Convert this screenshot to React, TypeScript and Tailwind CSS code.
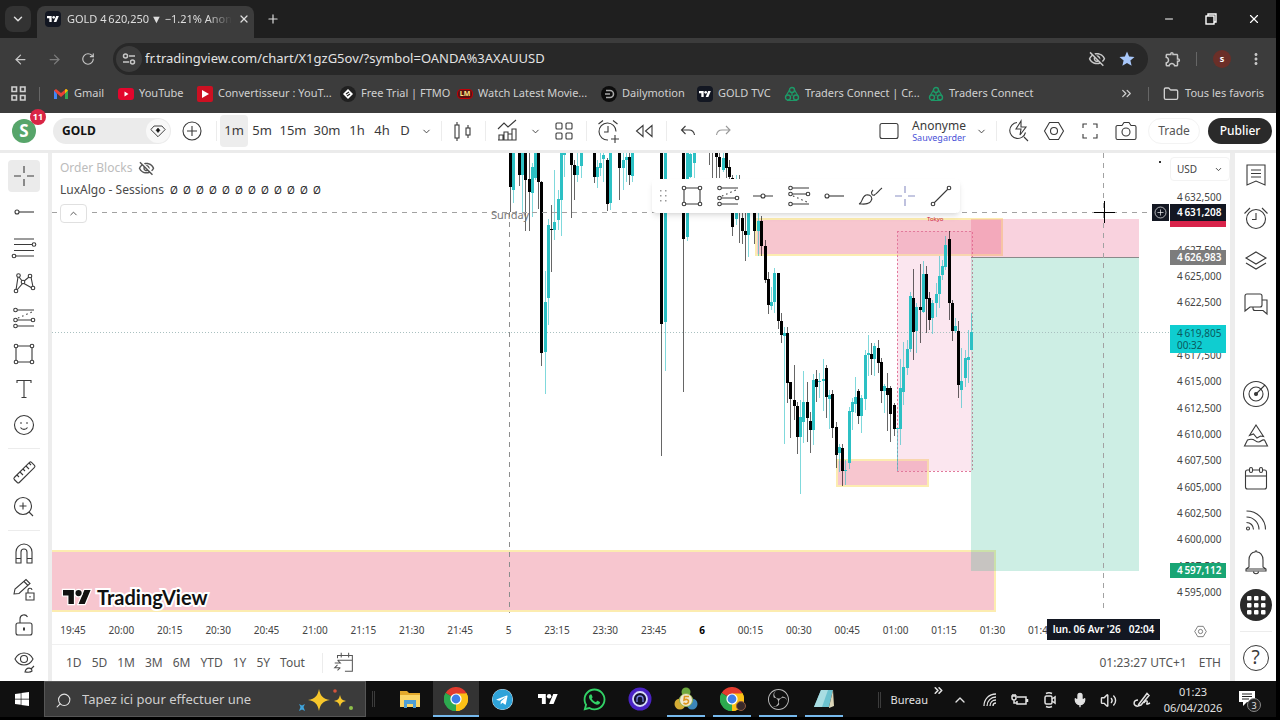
import type { ReactNode } from "react";
import {
  ArrowLeft,
  ArrowRight,
  ChevronDown,
  ChevronUp,
  ChevronsRight,
  Folder,
  Mic,
  Minus,
  Plus,
  RotateCw,
  Search,
  Volume2,
  X,
} from "lucide-react";
import { FaTelegram, FaWhatsapp, FaWindows } from "react-icons/fa";
import { MdMoreVert, MdOutlineExtension, MdOutlineVisibilityOff, MdStar } from "react-icons/md";
import { SiObsstudio } from "react-icons/si";

/* ── Icons ── */

function Glyph({ children, size = 28 }: { children: ReactNode; size?: number }) {
  return (
    <svg
      width={size}
      height={size}
      viewBox="0 0 28 28"
      fill="none"
      stroke="currentColor"
      strokeWidth="1.1"
      className="shrink-0"
      aria-hidden="true"
    >
      {children}
    </svg>
  );
}

function TvMark({ className }: { className?: string }) {
  return (
    <svg viewBox="0 4 36 18" className={className} fill="currentColor" aria-hidden="true">
      <path d="M14 22H7V11H0V4h14v18zM28 22h-8l7.5-18h8L28 22z" />
      <circle cx="20" cy="8" r="4" />
    </svg>
  );
}

function TvBadge() {
  return (
    <span className="flex h-4 w-4 shrink-0 items-center justify-center rounded-sm bg-[#131722] text-white">
      <TvMark className="w-3" />
    </span>
  );
}

function ChromeLogo({ size = 24 }: { size?: number }) {
  return (
    <svg width={size} height={size} viewBox="0 0 24 24" aria-hidden="true">
      <path d="M12 12 1.6 6A12 12 0 0 1 22.4 6z" fill="#e33b2e" />
      <path d="M12 12 22.4 6A12 12 0 0 1 12 24z" fill="#fbc116" />
      <path d="M12 12v12A12 12 0 0 1 1.6 6z" fill="#2da94f" />
      <path d="M12 6.5h10.6A12 12 0 0 1 12 24l4.8-9.2z" fill="#fbc116" />
      <path d="M1.6 6 7.2 14.8 12 17.5 12 24A12 12 0 0 1 1.6 6z" fill="#2da94f" />
      <circle cx="12" cy="12" r="5.6" fill="#fff" />
      <circle cx="12" cy="12" r="4.4" fill="#3f7ee8" />
    </svg>
  );
}

const icons = {
  cross: <path d="M14 4v7M14 17v7M4 14h7M17 14h7" />,
  hray: (
    <>
      <circle cx="7" cy="14" r="2" />
      <path d="M9 14h15" />
    </>
  ),
  hline: (
    <>
      <circle cx="14" cy="14" r="2" />
      <path d="M4 14h8M16 14h8" />
    </>
  ),
  fib: (
    <>
      <path d="M4 6h20M4 11.5h18M4 17.5h20M6 23h18" />
      <circle cx="24" cy="11.5" r="1.8" fill="#fff" />
      <circle cx="4" cy="23" r="1.8" fill="#fff" />
    </>
  ),
  pattern: (
    <>
      <path d="M6 21 8 8M9 8l4 5 6-5M21 8l2 10M7 21l6-7 9 5" />
      <circle cx="6" cy="22" r="1.8" fill="#fff" />
      <circle cx="8.500" cy="6.500" r="1.8" fill="#fff" />
      <circle cx="13" cy="13" r="1.8" fill="#fff" />
      <circle cx="20" cy="7" r="1.8" fill="#fff" />
      <circle cx="23" cy="19" r="1.8" fill="#fff" />
    </>
  ),
  forecast: (
    <>
      <path d="M7 6h17M7 16h15M7 22h17" />
      <path d="m8 14 14-6" strokeDasharray="1.5 3" />
      <circle cx="5.500" cy="6" r="1.8" fill="#fff" />
      <circle cx="5.500" cy="16" r="1.8" fill="#fff" />
      <circle cx="5.500" cy="22" r="1.8" fill="#fff" />
      <circle cx="23" cy="16" r="1.8" fill="#fff" />
    </>
  ),
  shortPos: (
    <>
      <path d="M7 6h17M7 12h15M7 22h17" />
      <path d="m8 14 14 6" strokeDasharray="1.5 3" />
      <circle cx="5.500" cy="6" r="1.8" fill="#fff" />
      <circle cx="5.500" cy="12" r="1.8" fill="#fff" />
      <circle cx="5.500" cy="22" r="1.8" fill="#fff" />
      <circle cx="23" cy="12" r="1.8" fill="#fff" />
    </>
  ),
  rect: (
    <>
      <path d="M8 6h12M8 22h12M6 8v12M22 8v12" />
      <circle cx="6" cy="6" r="1.8" />
      <circle cx="22" cy="6" r="1.8" />
      <circle cx="6" cy="22" r="1.8" />
      <circle cx="22" cy="22" r="1.8" />
    </>
  ),
  text: <path d="M7 8V5.500h14V8M14 5.500v17M11.500 22.500h5" />,
  smile: (
    <>
      <circle cx="14" cy="14" r="9.500" />
      <path d="M10.500 16.500c1.500 2.500 5.500 2.500 7 0" />
      <path d="M10.500 12h1M16.500 12h1" strokeWidth="2" />
    </>
  ),
  ruler: (
    <>
      <path d="M4.300 19.500 19.500 4.300a1.500 1.500 0 0 1 2 0l3 3a1.500 1.500 0 0 1 0 2L9.300 24.500a1.500 1.500 0 0 1-2 0l-3-3a1.500 1.500 0 0 1 0-2z" />
      <path d="m7 17 2 2M10 14l3 3M13 11l2 2M16 8l3 3M19 5l2 2" />
    </>
  ),
  zoom: (
    <>
      <circle cx="13" cy="13" r="8.500" />
      <path d="M13 9.500v7M9.500 13h7M19 19l4 4" />
    </>
  ),
  magnet: (
    <>
      <path d="M6 23V12a8 8 0 0 1 16 0v11h-5V12a3 3 0 0 0-6 0v11z" />
      <path d="M6 18.500h5M17 18.500h5" />
    </>
  ),
  pencilLock: (
    <>
      <path d="m4 18 1-5L16 3.500l4 4L9 17.500z M14 5.500l4 4" />
      <path d="M16 17h8v7h-8zM18 17v-2.500a2 2 0 0 1 4-.5M20 20v1.500" />
    </>
  ),
  lock: (
    <>
      <rect x="6" y="12" width="16" height="12" rx="2" />
      <path d="M10 12V8a4 4 0 0 1 7.500-2" />
      <path d="M14 16.500v3" strokeWidth="2" />
    </>
  ),
  eyeBrush: (
    <>
      <path d="M5 12c4-8 14-8 18 0-4 8-14 8-18 0z" />
      <circle cx="14" cy="12" r="3.500" />
      <path d="M15 25c1-5 7-5 7-1-2 2-5 1-7 1zM21 22l3-3" />
    </>
  ),
  candles: (
    <>
      <rect x="6" y="8" width="4" height="13" />
      <rect x="17" y="11" width="4" height="7" />
      <path d="M8 5v3M8 21v3M19 8v3M19 18v3" />
    </>
  ),
  indicators: (
    <>
      <path d="m5 12 6-6 4 4 8-7M6 23v-5h4v5M11 23v-8h4v8M15 23v-6h4v6M19 23V12h4v11zM5 23h18" />
    </>
  ),
  layouts: (
    <>
      <rect x="6" y="6" width="6" height="6" rx="1" />
      <rect x="16" y="6" width="6" height="6" rx="1" />
      <rect x="6" y="16" width="6" height="6" rx="1" />
      <rect x="16" y="16" width="6" height="6" rx="1" />
    </>
  ),
  alertAdd: (
    <>
      <path d="M22 14.500A8.500 8.500 0 1 0 14 23M14 9v6h-4M4.500 7 9 3.500M19 3.500 23.500 7M21 18v8M17 22h8" />
    </>
  ),
  replay: <path d="M13 8.500v11L6.500 14zM22 8.500v11L15.500 14z" />,
  undo: <path d="m11.500 9-4 4 4 4M8 13h7c4 0 5 2 5.500 5" />,
  redo: <path d="m16 9 4 4-4 4M19 13h-7c-4 0-5 2-5.500 5" />,
  layoutBox: <rect x="5" y="6.500" width="18" height="15" rx="2" />,
  quickSearch: (
    <>
      <path d="M13 5.500a8 8 0 1 0 8.500 10M20 20l4 4" />
      <path d="m17 4-5 8h5l-1 6 6-8h-5z" />
    </>
  ),
  gear: (
    <>
      <path d="M9.500 5.500h9L23.500 14l-5 8.500h-9L4.500 14z" />
      <circle cx="14" cy="14" r="3.500" />
    </>
  ),
  fullscreen: <path d="M7 11V7h4M17 7h4v4M21 17v4h-4M11 21H7v-4" />,
  camera: (
    <>
      <path d="M6 8.500h4l2-3h5l2 3h3.500a1.500 1.500 0 0 1 1.500 1.500v11a1.500 1.500 0 0 1-1.500 1.500h-17A1.500 1.500 0 0 1 4 21V10a1.500 1.500 0 0 1 1.500-1.500z" />
      <circle cx="14" cy="15" r="4" />
    </>
  ),
  brush: (
    <>
      <path d="M3 22c4-1 2-7 7-9 5-1 7 3 5 6-2 4-7 3-12 3z" />
      <path d="M17 8c-3 3-1 6 2 5M18 13c3-1 4-4 8-7" />
    </>
  ),
  trend: (
    <>
      <path d="M6.500 21.500 21.500 6.500" />
      <circle cx="6" cy="22" r="1.8" fill="#fff" />
      <circle cx="22" cy="6" r="1.8" fill="#fff" />
    </>
  ),
  watchlist: <path d="M5 4h18v20l-9-4-9 4zM9 9h10M9 12.500h10M9 16h10" />,
  alarm: (
    <>
      <circle cx="14" cy="15" r="9.500" />
      <path d="M14 9v6.500h-4M2.500 9.500 8 4M20 4l5.500 5.500" />
    </>
  ),
  layers: <path d="m14 5 10 6-10 6-10-6zM4 16l10 6 10-6" />,
  chat: (
    <>
      <path d="M5 4h13a2 2 0 0 1 2 2v9a2 2 0 0 1-2 2H8l-5 4V6a2 2 0 0 1 2-2z" />
      <path d="M20 10h5v14l-4-3.500h-8a2 2 0 0 1-2-2V17" />
    </>
  ),
  target: (
    <>
      <circle cx="14" cy="14" r="12.500" />
      <circle cx="14" cy="14" r="7" />
      <circle cx="14" cy="14" r="1.500" fill="currentColor" />
      <path d="m14 14 9-9" />
    </>
  ),
  pyramid: (
    <>
      <path d="M14 3 7.500 13.500l4-1.500 3.500 4 3.500-2 3 .5z" />
      <path d="M5.500 18 2.500 24h23l-3-6c-3-1-3 2-6 2-4 0-4-5-11-2z" />
    </>
  ),
  calendar: (
    <>
      <rect x="3.500" y="6" width="21" height="19" rx="2" />
      <path d="M3.500 12h21" />
      <rect x="7.500" y="3.500" width="3" height="5" rx="1.500" fill="#fff" />
      <rect x="17.500" y="3.500" width="3" height="5" rx="1.500" fill="#fff" />
    </>
  ),
  feed: (
    <>
      <circle cx="6" cy="22.500" r="1.500" />
      <path d="M4.500 16.500c4 0 7 3 7 7M4.500 11c7 0 12.500 5.500 12.500 12.500M4.500 5c10.500 0 19 8 19 18.500" />
    </>
  ),
  bell: (
    <>
      <path d="M7 19v-7c0-5 3-8 6-8 0-1.500 2-1.500 2 0 3 0 6 3 6 8v7l3 2v2H4v-2zM4 21h20" />
      <path d="M11.500 23.500c0 3 5 3 5 0" />
    </>
  ),
  goto: <path d="M7 9V6h16v17h-8M11 3v5M19 3v5M7 11h16M4 14h6l-3-3M10 19H4l3-3M7 22l3-3" />,
  diamond: (
    <>
      <path d="M8.500 7h11l4.500 5-10 10L4 12z" />
      <path d="m14 10 2.500 3-2.500 3-2.500-3z" fill="currentColor" />
    </>
  ),
  plusCircle: (
    <>
      <circle cx="14" cy="14" r="9" />
      <path d="M14 9v10M9 14h10" />
    </>
  ),
};

type IconName = keyof typeof icons;

/* ── Data ── */

type Bookmark = { label: string; width: string; icon: ReactNode };

const tradersIcon = (
  <svg width="16" height="16" viewBox="0 0 16 16" fill="none" stroke="#1d9a68" strokeWidth="1.4" className="shrink-0">
    <circle cx="8" cy="4" r="2.500" />
    <circle cx="4" cy="11.500" r="2.500" />
    <circle cx="12" cy="11.500" r="2.500" />
    <path d="M2.500 9 5.500 4M13.500 9l-3-5M3 14.500h10M8 7v3" strokeWidth="1.200" />
  </svg>
);

const bookmarks: Bookmark[] = [
  {
    label: "Gmail",
    width: "w-[65px]",
    icon: (
      <svg width="16" height="16" viewBox="0 0 16 16" className="shrink-0">
        <path d="M1 4v9h3V7.500z" fill="#4285f4" />
        <path d="M15 4v9h-3V7.500z" fill="#34a853" />
        <path d="M1 4.500 3 3l5 4 5-4-1 4.500L8 11 4 7.500z" fill="#ea4335" />
        <path d="m12 3.500 1.500-.5L15 4.500 12 7.500z" fill="#fbbc04" />
      </svg>
    ),
  },
  {
    label: "YouTube",
    width: "w-[79px]",
    icon: (
      <svg width="16" height="16" viewBox="0 0 16 16" className="shrink-0">
        <rect x="0" y="2" width="16" height="12" rx="3" fill="#e3062d" />
        <path d="m6.500 5.500 4 2.500-4 2.500z" fill="#fff" />
      </svg>
    ),
  },
  {
    label: "Convertisseur : YouT...",
    width: "w-[143px]",
    icon: (
      <svg width="16" height="16" viewBox="0 0 16 16" className="shrink-0">
        <rect width="16" height="16" rx="2" fill="#cc1022" />
        <path d="m5 4 7 4-7 4z" fill="#fff" />
      </svg>
    ),
  },
  {
    label: "Free Trial | FTMO",
    width: "w-[117px]",
    icon: (
      <svg width="16" height="16" viewBox="0 0 16 16" className="shrink-0">
        <circle cx="8" cy="8" r="8" fill="#202020" />
        <path d="m8 3 5 5-5 5-5-5z" fill="#fff" />
        <path d="m6 8 3-2M7 10l3-2" stroke="#202020" strokeWidth="1.2" />
      </svg>
    ),
  },
  {
    label: "Watch Latest Movie...",
    width: "w-[144px]",
    icon: (
      <span className="flex h-4 w-4 shrink-0 items-center">
        <span className="flex h-2.5 w-4 items-center justify-center rounded-sm border border-red-700 bg-[#5a1010] text-[7px] font-bold leading-none text-amber-200">
          LM
        </span>
      </span>
    ),
  },
  {
    label: "Dailymotion",
    width: "w-[96px]",
    icon: (
      <svg width="16" height="16" viewBox="0 0 16 16" className="shrink-0" fill="none">
        <circle cx="8" cy="8" r="8" fill="#0c0c0c" />
        <path d="M5 4.500h4a3.500 3.500 0 0 1 0 7H5M4 8h5" stroke="#a8a8a8" strokeWidth="1.6" />
      </svg>
    ),
  },
  { label: "GOLD TVC", width: "w-[87px]", icon: <TvBadge /> },
  { label: "Traders Connect | Cr...", width: "w-[144px]", icon: tradersIcon },
  { label: "Traders Connect", width: "w-[110px]", icon: tradersIcon },
];

const intervals = [
  { label: "1m", width: "w-7" },
  { label: "5m", width: "w-7" },
  { label: "15m", width: "w-[34px]" },
  { label: "30m", width: "w-[34px]" },
  { label: "1h", width: "w-[26px]" },
  { label: "4h", width: "w-[24px]" },
  { label: "D", width: "w-[22px]" },
];

const leftTools: (IconName | "sep")[] = [
  "cross",
  "hray",
  "fib",
  "pattern",
  "forecast",
  "rect",
  "text",
  "smile",
  "sep",
  "ruler",
  "zoom",
  "sep",
  "magnet",
  "pencilLock",
  "lock",
  "eyeBrush",
];

const floatingTools: IconName[] = ["rect", "forecast", "hline", "shortPos", "hray", "brush", "cross", "trend"];

// empty rows are the ones a price tag takes over
const prices = [
  "4\u2009632,500", "", "4\u2009627,500", "4\u2009625,000", "4\u2009622,500", "", "4\u2009617,500", "4\u2009615,000",
  "4\u2009612,500", "4\u2009610,000", "4\u2009607,500", "4\u2009605,000", "4\u2009602,500", "4\u2009600,000", "4\u2009597,500", "4\u2009595,000",
];

const times = [
  "19:45", "20:00", "20:15", "20:30", "20:45", "21:00", "21:15", "21:30", "21:45", "5", "23:15",
  "23:30", "23:45", "6", "00:15", "00:30", "00:45", "01:00", "01:15", "01:30", "01:45",
];

const ranges = ["1D", "5D", "1M", "3M", "6M", "YTD", "1Y", "5Y", "Tout"];

// x, high, body top, body bottom, low, rising
type Candle = [number, number, number, number, number, 0 | 1];

const candles: Candle[] = [
  [510, 153, 153, 187, 212, 0], [513, 153, 153, 190, 203, 1], [519, 153, 153, 175, 186, 0],
  [522, 153, 153, 175, 213, 1], [525, 153, 153, 180, 231, 0], [529, 153, 179, 192, 231, 0],
  [532, 163, 167, 193, 217, 1], [535, 153, 153, 178, 180, 1], [538, 153, 153, 182, 209, 0],
  [541, 181, 182, 353, 366, 0], [545, 271, 302, 352, 394, 1], [548, 219, 225, 298, 325, 1],
  [551, 205, 229, 230, 272, 0], [554, 170, 222, 230, 240, 1], [558, 190, 199, 220, 230, 1],
  [561, 153, 153, 200, 236, 1], [564, 153, 153, 155, 177, 1], [571, 153, 153, 165, 218, 0],
  [574, 160, 165, 175, 200, 0], [577, 153, 166, 175, 182, 1], [581, 153, 153, 166, 178, 1],
  [594, 153, 153, 177, 183, 0], [597, 160, 167, 177, 188, 1], [600, 153, 163, 168, 176, 1],
  [603, 153, 155, 159, 182, 1], [607, 158, 160, 204, 211, 0], [610, 153, 153, 203, 210, 1],
  [619, 153, 153, 168, 200, 0], [623, 153, 160, 168, 190, 1], [626, 153, 157, 160, 182, 1],
  [629, 153, 157, 175, 185, 0], [632, 153, 153, 176, 182, 1], [661, 153, 153, 324, 456, 0],
  [665, 153, 153, 322, 371, 1], [683, 153, 153, 239, 392, 0], [687, 153, 153, 237, 241, 1],
  [690, 153, 154, 177, 178, 1], [694, 153, 153, 163, 178, 1], [709, 153, 153, 153, 165, 0],
  [712, 153, 153, 153, 178, 0], [716, 153, 153, 157, 178, 0], [719, 153, 157, 167, 178, 0],
  [723, 153, 158, 170, 172, 1], [726, 153, 153, 168, 178, 0], [729, 160, 167, 177, 185, 0],
  [732, 175, 178, 227, 236, 0], [736, 175, 180, 219, 225, 1], [739, 175, 212, 213, 243, 0],
  [742, 212, 218, 231, 244, 0], [745, 212, 231, 235, 261, 0], [748, 205, 212, 235, 257, 1],
  [754, 205, 210, 231, 244, 0], [758, 212, 221, 231, 256, 1], [761, 216, 221, 246, 256, 0],
  [765, 240, 246, 280, 283, 0], [768, 272, 279, 305, 314, 0], [771, 287, 302, 306, 310, 1],
  [774, 268, 273, 302, 313, 1], [778, 273, 273, 321, 329, 0], [781, 313, 321, 335, 343, 0],
  [784, 327, 333, 336, 444, 1], [787, 327, 333, 383, 403, 0], [790, 382, 382, 399, 438, 0],
  [794, 365, 400, 406, 420, 0], [797, 402, 406, 437, 454, 0], [800, 400, 417, 437, 494, 1],
  [803, 371, 402, 422, 443, 1], [807, 382, 402, 418, 442, 0], [810, 412, 421, 430, 453, 0],
  [813, 374, 380, 430, 445, 1], [816, 370, 379, 387, 402, 0], [819, 373, 381, 382, 398, 1],
  [823, 359, 379, 381, 411, 1], [826, 365, 368, 397, 418, 0], [829, 390, 395, 399, 429, 1],
  [832, 390, 394, 428, 438, 0], [836, 422, 427, 455, 468, 0], [839, 444, 447, 453, 472, 1],
  [842, 444, 448, 471, 486, 0], [845, 460, 470, 471, 485, 1], [849, 407, 411, 463, 469, 1],
  [852, 398, 402, 412, 430, 1], [855, 377, 397, 404, 413, 1], [858, 389, 391, 416, 424, 0],
  [861, 395, 398, 416, 433, 1], [865, 350, 355, 399, 410, 1], [868, 335, 353, 355, 376, 1],
  [871, 343, 354, 359, 375, 0], [874, 343, 346, 359, 376, 1], [878, 340, 348, 363, 373, 0],
  [881, 358, 362, 391, 403, 0], [884, 384, 386, 391, 413, 1], [887, 373, 388, 395, 431, 0],
  [890, 386, 388, 414, 442, 0], [894, 403, 405, 429, 436, 0], [897, 428, 428, 429, 471, 1],
  [900, 359, 388, 429, 445, 1], [903, 342, 367, 392, 405, 1], [907, 340, 349, 368, 375, 1],
  [910, 292, 296, 349, 352, 1], [913, 269, 298, 332, 360, 0], [916, 303, 307, 331, 353, 1],
  [920, 264, 307, 310, 343, 0], [923, 261, 274, 312, 313, 1], [926, 266, 274, 299, 333, 0],
  [929, 292, 298, 320, 330, 0], [932, 300, 303, 318, 334, 1], [936, 283, 294, 303, 317, 1],
  [939, 256, 276, 294, 308, 1], [942, 260, 266, 275, 280, 1], [945, 236, 245, 267, 270, 1],
  [949, 231, 239, 303, 320, 0], [952, 300, 303, 331, 341, 0], [955, 318, 326, 331, 333, 1],
  [958, 321, 331, 385, 398, 0], [961, 348, 381, 390, 408, 1], [965, 350, 358, 378, 387, 1],
  [968, 330, 357, 360, 383, 1], [971, 313, 332, 350, 350, 1],
];

/* ── Browser chrome ── */

function TabStrip() {
  return (
    <div className="flex h-[38px] items-end bg-[#1f1f1f] pl-[5px] text-[#dedede]">
      <button className="mb-1.5 flex h-[26px] w-[26px] items-center justify-center rounded-lg bg-[#333]" aria-label="Rechercher des onglets">
        <ChevronDown size={14} strokeWidth={2.5} />
      </button>
      <div className="ml-1.5 flex h-8 w-[217px] items-center gap-1.5 rounded-t-lg bg-[#3c3c3c] pb-1.5 pl-2 pr-2">
        <TvBadge />
        <span className="flex-1 whitespace-nowrap text-[11px] [mask-image:linear-gradient(to_right,black_85%,transparent)]">
          {"GOLD 4\u2009620,250\u2009▼ −1.21% Anon"}
        </span>
        <button aria-label="Fermer" className="flex w-4 justify-center">
          <X size={12} strokeWidth={2.5} />
        </button>
      </div>
      <button aria-label="Nouvel onglet" className="mb-3 ml-3">
        <Plus size={14} strokeWidth={2} />
      </button>
      <div className="ml-auto flex h-full items-center gap-[30px] pr-[15px] text-white">
        <button aria-label="Réduire">
          <Minus size={12} />
        </button>
        <button aria-label="Restaurer">
          <svg width="12" height="12" viewBox="0 0 12 12" fill="none" stroke="currentColor" strokeWidth="1.4">
            <rect x="1" y="3" width="8" height="8" />
            <path d="M3 3V1h8v8H9" />
          </svg>
        </button>
        <button aria-label="Fermer la fenêtre">
          <X size={14} />
        </button>
      </div>
    </div>
  );
}

function AddressBar() {
  return (
    <div className="flex h-[42px] items-center bg-[#3c3c3c] pl-[13px] pr-[11px] text-[#c7c7c7]">
      <div className="flex w-[100px] shrink-0 items-center gap-[19px]">
        <button aria-label="Retour">
          <ArrowLeft size={15} />
        </button>
        <button aria-label="Suivant" className="text-[#7c7c7c]">
          <ArrowRight size={15} />
        </button>
        <button aria-label="Actualiser">
          <RotateCw size={14} />
        </button>
      </div>
      <div className="flex h-8 flex-1 items-center rounded-full bg-[#282828] pl-[3px] pr-3">
        <button aria-label="Informations du site" className="flex h-[26px] w-[26px] items-center justify-center rounded-full bg-[#3c3c3c]">
          <svg width="14" height="14" viewBox="0 0 14 14" fill="none" stroke="currentColor" strokeWidth="1.5">
            <circle cx="3.500" cy="4" r="2" />
            <circle cx="10.500" cy="10" r="2" />
            <path d="M7 4h6M1 10h6" />
          </svg>
        </button>
        <input
          aria-label="Adresse"
          className="ml-[3px] min-w-0 flex-1 bg-transparent text-[13px] text-[#e3e3e3] outline-none"
          defaultValue="fr.tradingview.com/chart/X1gzG5ov/?symbol=OANDA%3AXAUUSD"
        />
        <MdOutlineVisibilityOff size={18} />
        <MdStar size={18} className="ml-3 text-[#a8c7fa]" />
      </div>
      <button aria-label="Extensions" className="ml-4">
        <MdOutlineExtension size={18} />
      </button>
      <span className="ml-3.5 h-3.5 w-px bg-[#666]" />
      <span className="ml-4 flex h-[18px] w-[18px] items-center justify-center rounded-full bg-[#6b2f28] text-[9px] font-bold text-white">
        s
      </span>
      <button aria-label="Menu" className="ml-4">
        <MdMoreVert size={18} />
      </button>
    </div>
  );
}

function BookmarkBar() {
  return (
    <nav className="flex h-[33px] items-center bg-[#3c3c3c] pl-[11px] pr-3 pb-1.5 text-[11px] text-[#d0d0d0]">
      <svg width="15" height="15" viewBox="0 0 15 15" fill="none" stroke="currentColor" strokeWidth="1.6" className="shrink-0">
        <path d="M1 1h4.500v4.500H1zM9.500 1H14v4.500H9.500zM1 9.500h4.500V14H1zM9.500 9.500H14V14H9.500z" />
      </svg>
      <span className="mx-[13px] h-3.5 w-px shrink-0 bg-[#666]" />
      {bookmarks.map((b, i) => (
        <a key={i} href="#" className={`${b.width} flex shrink-0 items-center gap-[5px] whitespace-nowrap`}>
          {b.icon}
          {b.label}
        </a>
      ))}
      <ChevronsRight size={15} className="ml-auto" />
      <span className="mx-3.5 h-3.5 w-px bg-[#666]" />
      <a href="#" className="flex items-center gap-1.5 whitespace-nowrap">
        <Folder size={16} />
        Tous les favoris
      </a>
    </nav>
  );
}

/* ── TradingView header ── */

function Sep() {
  return (
    <span className="flex w-2 shrink-0 justify-center">
      <span className="h-5 w-px bg-[#ececec]" />
    </span>
  );
}

function HeaderButton({ icon, label, className = "" }: { icon: IconName; label: string; className?: string }) {
  return (
    <button aria-label={label} className={`flex w-9 shrink-0 items-center justify-center ${className}`}>
      <Glyph>{icons[icon]}</Glyph>
    </button>
  );
}

function Caret() {
  return (
    <button aria-label="Plus d’options" className="flex w-[21px] shrink-0 justify-center">
      <ChevronDown size={11} strokeWidth={2} />
    </button>
  );
}

function ChartHeader() {
  return (
    <header className="flex h-10 items-center border-b-3 border-[#ebebeb] bg-white pb-px text-[13px] text-[#3a3a3a]">
      <div className="relative ml-3 h-6 w-[41px] shrink-0">
        <span className="flex h-6 w-6 items-center justify-center rounded-full bg-[#57a56a] text-[17px] font-bold text-white">S</span>
        <span className="absolute -top-2.5 left-[18px] flex h-4 w-4 items-center justify-center rounded-full bg-[#d92545] text-[9px] font-bold text-white">
          11
        </span>
      </div>
      <button className="flex h-[26px] w-[118px] shrink-0 items-center justify-between rounded-full bg-[#ebebeb] pl-[9px] pr-px text-[12px] font-bold text-[#111]">
        GOLD
        <span className="flex h-6 w-6 items-center justify-center rounded-full bg-[#f8f8f8]">
          <Glyph size={20}>{icons.diamond}</Glyph>
        </span>
      </button>
      <button aria-label="Comparer" className="flex w-[41px] shrink-0 justify-center">
        <Glyph>{icons.plusCircle}</Glyph>
      </button>
      <Sep />
      {intervals.map((it, i) => (
        <button key={it.label} className={`${it.width} flex h-8 shrink-0 items-center justify-center rounded ${i === 0 ? "bg-[#ededed]" : ""}`}>
          {it.label}
        </button>
      ))}
      <Caret />
      <Sep />
      <HeaderButton icon="candles" label="Type de graphique" />
      <Sep />
      <HeaderButton icon="indicators" label="Indicateurs" />
      <Caret />
      <HeaderButton icon="layouts" label="Modèles" />
      <Sep />
      <HeaderButton icon="alertAdd" label="Alerte" />
      <HeaderButton icon="replay" label="Replay" />
      <Sep />
      <HeaderButton icon="undo" label="Annuler" />
      <HeaderButton icon="redo" label="Rétablir" className="text-[#999]" />

      <HeaderButton icon="layoutBox" label="Disposition" className="ml-auto" />
      <button className="flex w-[64px] shrink-0 flex-col items-center leading-none">
        <span className="text-[12px] leading-[14px]">Anonyme</span>
        <span className="text-[9px] leading-[10px] text-[#4a52d8]">Sauvegarder</span>
      </button>
      <Caret />
      <Sep />
      <HeaderButton icon="quickSearch" label="Recherche rapide" />
      <HeaderButton icon="gear" label="Paramètres" />
      <HeaderButton icon="fullscreen" label="Plein écran" />
      <HeaderButton icon="camera" label="Capture" />
      <button className="ml-1 h-[26px] w-[52px] rounded-full border border-[#f3f3f3] text-[12px] text-[#555]">Trade</button>
      <button className="ml-2 mr-1 h-[26px] w-16 rounded-full bg-[#2a2a2a] text-[12px] font-medium text-white">Publier</button>
    </header>
  );
}

/* ── Side bars ── */

function DrawingBar() {
  return (
    <aside className="flex w-[52px] shrink-0 flex-col items-center justify-between border-r-4 border-[#ededed] bg-white pb-1 pt-[7px] text-[#3a3a3a]">
      {leftTools.map((tool, i) =>
        tool === "sep" ? (
          <span key={i} className="flex h-2 w-8 items-center">
            <span className="h-px w-full bg-[#ececec]" />
          </span>
        ) : (
          <button key={i} aria-label={tool} className={`flex h-8 w-8 items-center justify-center rounded ${i === 0 ? "bg-[#ebebeb]" : ""}`}>
            <Glyph>{icons[tool]}</Glyph>
          </button>
        ),
      )}
    </aside>
  );
}

function WidgetButton({ icon, height }: { icon: IconName; height: string }) {
  return (
    <button aria-label={icon} className={`${height} flex w-full items-center justify-center`}>
      <Glyph>{icons[icon]}</Glyph>
    </button>
  );
}

function WidgetBar() {
  return (
    <aside className="flex w-[46px] shrink-0 flex-col items-center border-l-5 border-[#ededed] bg-white pb-0.5 text-[#3a3a3a]">
      {(["watchlist", "alarm", "layers", "chat"] as IconName[]).map((n) => (
        <WidgetButton key={n} icon={n} height="h-[43px]" />
      ))}
      <span className="flex-1" />
      {(["target", "pyramid", "calendar", "feed", "bell"] as IconName[]).map((n) => (
        <WidgetButton key={n} icon={n} height="h-[42px]" />
      ))}
      <button aria-label="Produits" className="my-1.5 flex h-8 w-8 items-center justify-center rounded-full bg-[#2a2a2a]">
        <svg width="20" height="20" viewBox="0 0 20 20" fill="#fff">
          {[1, 8, 15].map((x) => [1, 8, 15].map((y) => <rect key={`${x}-${y}`} x={x} y={y} width="4.500" height="4.500" rx="1" />))}
        </svg>
      </button>
      <span className="my-1 h-px w-8 bg-[#ececec]" />
      <button aria-label="Aide" className="flex h-[43px] items-center">
        <span className="flex h-[26px] w-[26px] items-center justify-center rounded-full border border-[#3a3a3a] text-[19px] leading-none">?</span>
      </button>
    </aside>
  );
}

/* ── Chart ── */

function Plot() {
  return (
    <svg className="absolute inset-0 h-full w-full" aria-hidden="true">
      <g transform="translate(-52 -153)" shapeRendering="crispEdges">
        {/* order block zones */}
        <g fill="#f7c6cf" stroke="#fcecb0" strokeWidth="2">
          <rect x="756" y="219" width="246" height="36" />
          <rect x="837" y="460" width="91" height="26" />
          <rect x="50" y="551" width="945" height="60" />
        </g>

        {/* session range */}
        <rect x="897" y="231" width="75" height="240" fill="#ec80ad" fillOpacity="0.2" stroke="#e27a9c" strokeDasharray="2 2" />

        {/* short position */}
        <rect x="971" y="219" width="168" height="38" fill="#ea5c87" fillOpacity="0.28" />
        <rect x="971" y="258" width="168" height="313" fill="#45bf9c" fillOpacity="0.27" />
        <path d="M971 257.500h168" stroke="#8a8a8a" />

        {/* last price and session break */}
        <path d="M52 332.500h1118" stroke="#a9c0c0" strokeDasharray="1 2" />
        <path d="M509.500 212v401" stroke="#8d8d8d" strokeDasharray="5 5" />

        {candles.map(([x, high, top, bottom, low, up]) => (
          <g key={x} fill={up ? "#2cc0c4" : "#000"}>
            <rect x={x} y={high} width="1" height={low - high} fillOpacity="0.6" />
            <rect x={x - 1} y={top} width="3" height={Math.max(bottom - top, 0)} />
          </g>
        ))}

        {/* crosshair */}
        <path d="M52 212.500h1100M1103.500 153v460" stroke="#a2a2a2" strokeDasharray="5 5" />
        <path d="M1104.500 201v22M1094 212.500h21" stroke="#000" strokeWidth="1.500" />
        <rect x="1159" y="161" width="2" height="2" fill="#333" />
      </g>
      <text x="439" y="66" fontSize="11" fill="#777">Sunday</text>
      <text x="875" y="68" fontSize="6" fill="#d02040">Tokyo</text>
    </svg>
  );
}

function Legend() {
  return (
    <div className="relative flex flex-col items-start pl-2 pt-[7px] text-[12px] text-[#4a4a4a]">
      <div className="flex h-4 items-center gap-1.5 text-[#bcbcbc]">
        Order Blocks
        <MdOutlineVisibilityOff size={17} className="text-[#555]" />
      </div>
      <div className="mt-1.5 flex h-4 items-center gap-1.5">
        LuxAlgo - Sessions
        <span className="flex text-[10px] text-[#222]">
          {Array.from({ length: 12 }, (_, i) => (
            <span key={i} className="w-[13px]">Ø</span>
          ))}
        </span>
      </div>
      <button aria-label="Réduire la légende" className="mt-1.5 flex h-[19px] w-[27px] items-center justify-center rounded-sm border border-[#e0e0e0] bg-white">
        <ChevronUp size={11} strokeWidth={2} />
      </button>
    </div>
  );
}

function FloatingTools() {
  return (
    <div className="absolute left-[600px] top-[26px] flex h-[34px] w-[308px] items-center rounded bg-white pl-[7px] pr-[5px] text-[#3a3a3a] shadow-md">
      <svg width="8" height="14" viewBox="0 0 8 14" fill="#999" className="mr-[11px]">
        {[1, 6].map((x) => [1, 6, 11].map((y) => <rect key={`${x}-${y}`} x={x} y={y} width="1.500" height="1.500" />))}
      </svg>
      <div className="flex flex-1 justify-between">
        {floatingTools.map((n, i) => (
          <button key={i} aria-label={n} className={`flex w-7 justify-center ${n === "cross" ? "text-[#8a8fc4]" : ""}`}>
            <Glyph>{icons[n]}</Glyph>
          </button>
        ))}
      </div>
    </div>
  );
}

function PriceScale() {
  return (
    <div className="relative ml-auto flex w-[60px] flex-col pb-[14px] pt-1 text-[10px] text-[#444]">
      <label className="relative flex h-6 items-center rounded border border-[#f3f3f3]">
        <select aria-label="Devise" defaultValue="USD" className="w-full appearance-none bg-transparent pl-1.5 outline-none">
          <option>USD</option>
        </select>
        <ChevronDown size={9} strokeWidth={2.5} className="absolute right-1.5" />
      </label>
      <ol className="mt-[9px] flex flex-1 flex-col justify-between pl-[7px]">
        {prices.map((p, i) => (
          <li key={i} className="h-3.5 whitespace-nowrap leading-[14px]">{p}</li>
        ))}
      </ol>
      <div className="absolute left-0 top-[60px] h-[14px] w-14 bg-[#d8234a]" />
      <div className="absolute -left-[18px] top-[51px] flex h-[17px] gap-px text-white">
        <button aria-label="Ajouter une alerte" className="flex w-[17px] items-center justify-center bg-[#131722]">
          <Glyph size={17}>{icons.plusCircle}</Glyph>
        </button>
        <span className="w-14 whitespace-nowrap bg-[#131722] pl-[7px] font-semibold leading-[17px]">{"4\u2009631,208"}</span>
      </div>
      <div className="absolute left-0 top-[97px] h-[15px] w-14 whitespace-nowrap bg-[#7c7c7c] pl-[7px] font-semibold leading-[15px] text-white">{"4\u2009626,983"}</div>
      <div className="absolute left-0 top-[172px] h-7 w-14 whitespace-nowrap bg-[#0fcdd0] pl-[7px] pt-0.5 leading-[12px] text-[#0a5a60]">
        {"4\u2009619,805"}
        <br />
        00:32
      </div>
      <div className="absolute left-0 top-[410px] h-[15px] w-14 whitespace-nowrap bg-[#18a574] pl-[7px] font-semibold leading-[15px] text-white">{"4\u2009597,112"}</div>
    </div>
  );
}

function TimeScale() {
  return (
    <div className="relative flex h-8 shrink-0 items-center justify-between border-b border-[#f0f0f0] pl-px pr-[169px] pt-1 text-[10px] text-[#444]">
      {times.map((t) => (
        <span key={t} className={`w-10 text-center ${t === "6" ? "font-bold text-black" : ""}`}>{t}</span>
      ))}
      <span className="absolute left-[995px] top-[6px] flex h-[21px] w-[113px] items-center justify-center gap-2 whitespace-nowrap bg-[#131722] font-semibold text-white">
        <span>lun. 06 Avr '26</span>
        <span>02:04</span>
      </span>
      <button aria-label="Réglages de l’échelle" className="absolute right-[21px] top-2.5">
        <Glyph size={17}>{icons.gear}</Glyph>
      </button>
    </div>
  );
}

function RangeBar() {
  return (
    <div className="flex h-9 shrink-0 items-center pl-[9px] pr-[9px] text-[12px] text-[#555]">
      {ranges.map((r) => (
        <button key={r} className="px-[5px]">{r}</button>
      ))}
      <span className="ml-3 h-5 w-px bg-[#ececec]" />
      <button aria-label="Aller à" className="ml-2">
        <Glyph size={26}>{icons.goto}</Glyph>
      </button>
      <button className="ml-auto">01:23:27 UTC+1</button>
      <button className="ml-3">ETH</button>
    </div>
  );
}

function ChartArea() {
  return (
    <main className="flex min-w-0 flex-1 flex-col bg-white">
      <section className="relative flex min-h-[460px] flex-1 overflow-hidden">
        <Plot />
        <Legend />
        <FloatingTools />
        <div className="absolute bottom-1 left-[11px] flex items-center gap-1.5 text-[#111]">
          <TvMark className="w-7 overflow-visible stroke-white stroke-3 [paint-order:stroke]" />
          <span className="font-['Lato',sans-serif] text-[20px] font-bold leading-6 [-webkit-text-stroke:4px_white] [paint-order:stroke]">TradingView</span>
        </div>
        <PriceScale />
      </section>
      <TimeScale />
      <RangeBar />
    </main>
  );
}

/* ── Windows taskbar ── */

const taskApps: { name: string; state?: "active" | "open"; icon: ReactNode }[] = [
  {
    name: "Explorateur",
    icon: (
      <svg width="22" height="20" viewBox="0 0 22 20">
        <path d="M1 2h7l2 2h11v14H1z" fill="#e3a92c" />
        <path d="M1 6h20v12H1z" fill="#fbd668" />
        <path d="M5 19v-8h12v8h-3v-4H8v4z" fill="#4f9fd6" />
      </svg>
    ),
  },
  { name: "Chrome", state: "active", icon: <ChromeLogo /> },
  { name: "Telegram", icon: <FaTelegram size={21} className="rounded-full bg-white text-[#2fa3d9]" /> },
  { name: "TradingView", icon: <TvMark className="w-5 text-white" /> },
  { name: "WhatsApp", icon: <FaWhatsapp size={25} className="text-[#32d266]" /> },
  {
    name: "Caméra",
    icon: (
      <svg width="24" height="24" viewBox="0 0 24 24" fill="none">
        <circle cx="12" cy="12" r="11.500" fill="#4a22c4" />
        <circle cx="12" cy="12" r="7" fill="#141230" stroke="#d8dcf8" strokeWidth="1.800" />
        <path d="M9 15v-3a3 3 0 0 1 6 0v3" stroke="#7580dd" strokeWidth="1.300" />
      </svg>
    ),
  },
  {
    name: "MetaTrader",
    state: "open",
    icon: (
      <svg width="24" height="24" viewBox="0 0 24 24">
        <circle cx="12" cy="5" r="4.500" fill="#6da83f" />
        <circle cx="6" cy="17" r="5.500" fill="#d3ac35" />
        <circle cx="18" cy="17" r="5.500" fill="#3b85b8" />
        <circle cx="12" cy="13" r="6.500" fill="#f0e8d0" stroke="#8fb04c" />
        <path d="M15 9.500h-4.500L10 13c3-1.500 5 0 4.500 2s-3 2.500-5 1" fill="none" stroke="#dc9520" strokeWidth="1.600" />
      </svg>
    ),
  },
  {
    name: "Chrome 2",
    state: "open",
    icon: (
      <span className="relative">
        <ChromeLogo />
        <span className="absolute -right-0.5 bottom-0 h-2.5 w-2.5 rounded-full border border-[#8c5840] bg-[#3a2a2a]" />
      </span>
    ),
  },
  { name: "OBS", state: "open", icon: <SiObsstudio size={21} className="text-[#bcbcbc]" /> },
  {
    name: "Bloc-notes",
    state: "open",
    icon: (
      <svg width="24" height="22" viewBox="0 0 24 22">
        <path d="M9 2h12l-4 17H2z" fill="#6cc2cf" />
        <path d="M9 2h7L10 19H2z" fill="#a9dde2" />
        <path d="m21 2 1 16-5 2v-1z" fill="#dbd5b8" />
      </svg>
    ),
  },
];

function Taskbar() {
  return (
    <footer className="flex h-9 shrink-0 items-stretch bg-[#101010] text-[#e2e2e2]">
      <button aria-label="Démarrer" className="flex w-11 shrink-0 items-center justify-center text-white">
        <FaWindows size={16} />
      </button>
      <label className="flex w-[322px] shrink-0 items-center border border-[#565656] bg-[#3b3b3b] pl-2.5 pt-0.5">
        <Search size={17} strokeWidth={1.5} className="-scale-x-100" />
        <input aria-label="Rechercher" placeholder="Tapez ici pour effectuer une" className="ml-2.5 min-w-0 flex-1 bg-transparent text-[13px] outline-none placeholder:text-[#cfcfcf]" />
        <svg width="66" height="28" viewBox="0 0 66 28" className="shrink-0">
          <path d="M20 3c1.500 7 3.500 9.500 11 11-7.500 1.500-9.500 4-11 11-1.500-7-3.500-9.500-11-11 7.500-1.500 9.500-4 11-11z" fill="#f6c62b" />
          <path d="M41 9c1 4 2 5 6 6-4 1-5 2-6 6-1-4-2-5-6-6 4-1 5-2 6-6z" fill="#f6c62b" />
          <path d="m0 18 3 1.500 3-1.500-1.500 3L6 25l-3-1.500L0 25l1.500-4z" fill="#3fa4dc" />
          <circle cx="36" cy="5" r="1.800" fill="#d5533c" />
          <circle cx="52" cy="22" r="2" fill="#8fc04a" />
        </svg>
      </label>
      <span className="ml-1.5 mr-3 h-4 w-[3px] self-center border-x border-[#3c3c3c]" />
      {taskApps.map((app) => (
        <button
          key={app.name}
          aria-label={app.name}
          className={`flex w-[46px] shrink-0 items-center justify-center px-1 ${app.state === "active" ? "bg-[#333]" : ""}`}
        >
          <span
            className={`flex h-full items-center justify-center border-b-2 pt-0.5 ${
              app.state === "active" ? "-mx-1 w-[46px] shrink-0 border-[#76b9ed]" : app.state === "open" ? "w-full border-[#76b9ed]" : "w-full border-transparent"
            }`}
          >
            {app.icon}
          </span>
        </button>
      ))}
      <div className="ml-auto flex items-center pt-0.5">
        <span className="mr-2.5 h-4 w-[3px] border-x border-[#3c3c3c]" />
        <span className="text-[11px]">Bureau</span>
        <ChevronsRight size={13} strokeWidth={3} className="ml-1 mb-5" />
        <div className="flex items-center">
          <button aria-label="Icônes masquées" className="flex w-[30px] justify-center">
            <ChevronUp size={16} />
          </button>
          <span className="flex w-[30px] justify-center">
            <svg width="14" height="14" viewBox="0 0 14 14" fill="none" stroke="currentColor" strokeWidth="1.300">
              <path d="M1 13C1 6 6 1 13 1M4 13c0-5 4-9 9-9M7 13c0-3.500 2.500-6 6-6M10 13c0-2 1-3 3-3" />
            </svg>
          </span>
          <span className="flex w-[30px] justify-center">
            <svg width="18" height="14" viewBox="0 0 18 14" fill="none" stroke="currentColor" strokeWidth="1.500">
              <path d="M6 4h9v7H6V8M1 3h4v2a2 2 0 0 1-4 0zM3 7v3h3M2 1v2M4 1v2M16.500 6v3" />
            </svg>
          </span>
          <span className="flex w-[30px] justify-center">
            <svg width="12" height="16" viewBox="0 0 12 16" fill="none" stroke="currentColor" strokeWidth="1.500">
              <rect x="1" y="4" width="7" height="8" rx="1.500" />
              <path d="m8 7 3-2v6L8 9M2 1.500c2-1 4-1 6 0M2 14.500c2 1 4 1 6 0" />
            </svg>
          </span>
          <span className="flex w-[29px] justify-center">
            <Mic size={16} fill="currentColor" />
          </span>
          <span className="flex w-[29px] justify-center">
            <Volume2 size={17} />
          </span>
          <span className="flex w-[38px] justify-center">
            <svg width="18" height="16" viewBox="0 0 18 16" fill="none" stroke="currentColor" strokeWidth="1.500">
              <path d="M6 12 14 1.500l2 2L8 13l-3 1zM5 8c-5 0-5 6-1 6M11 11c1-3 4-3 3 0-1 2 1 1 3 0" />
            </svg>
          </span>
        </div>
        <div className="flex w-[64px] flex-col items-center text-[11px] leading-4">
          <span>01:23</span>
          <span>06/04/2026</span>
        </div>
        <button aria-label="Notifications" className="relative ml-3.5 mr-[21px] mb-1">
          <svg width="16" height="16" viewBox="0 0 16 16" fill="#fff">
            <path d="M0 1h16v11H8l-4 4v-4H0z" />
            <path d="M3 4h10M3 6.500h10M3 9h7" stroke="#222" />
          </svg>
          <span className="absolute -bottom-1.5 left-2 flex h-[14px] w-[14px] items-center justify-center rounded-full border border-[#888] bg-[#222] text-[9px] leading-none">3</span>
        </button>
      </div>
    </footer>
  );
}

export default function App() {
  return (
    <div className="flex min-h-screen flex-col bg-black pb-[3px] pr-[4px] font-['Noto_Sans',sans-serif]">
      <TabStrip />
      <AddressBar />
      <BookmarkBar />
      <ChartHeader />
      <div className="flex flex-1">
        <DrawingBar />
        <ChartArea />
        <WidgetBar />
      </div>
      <Taskbar />
    </div>
  );
}
